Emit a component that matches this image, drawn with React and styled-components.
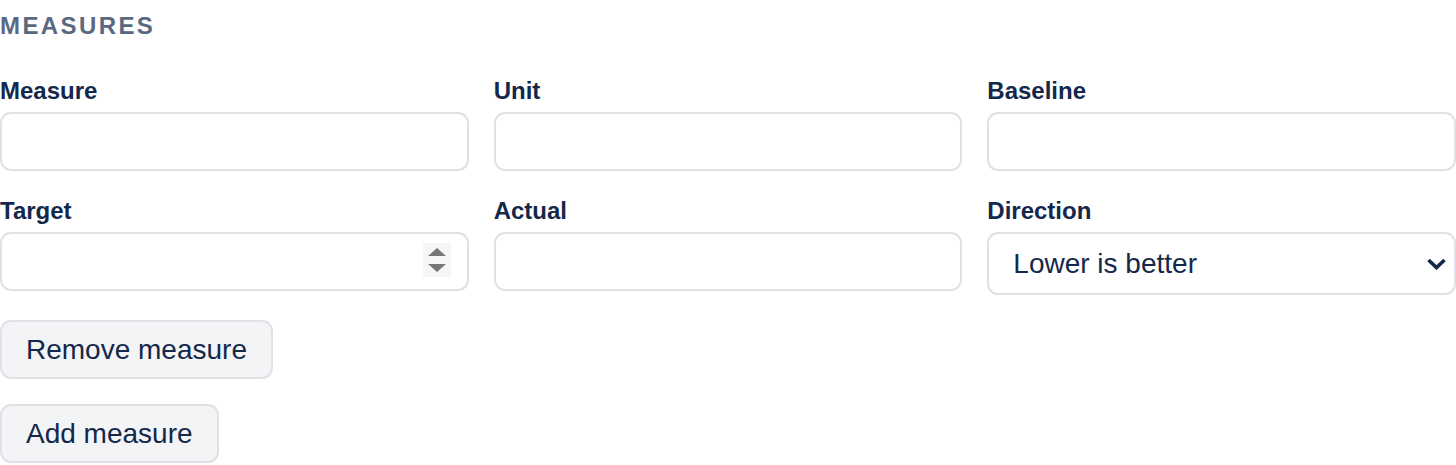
import React from "react";
import styled, { createGlobalStyle } from "styled-components";

const GlobalStyle = createGlobalStyle`
    body {
        margin: 0;
        background: #ffffff;
        font-family: "Liberation Sans", Arial, sans-serif;
        color: #13284b;
    }
`;

const Section = styled.section`
    width: 1456px;
    display: flex;
    flex-direction: column;
`;

const Heading = styled.h2`
    margin: 12px 0 0;
    font-size: 24px;
    line-height: 28px;
    font-weight: 700;
    letter-spacing: 2.4px;
    text-transform: uppercase;
    color: #5a6882;
`;

const Grid = styled.div`
    display: grid;
    grid-template-columns: repeat(3, 1fr);
    column-gap: 25px;
    row-gap: 26px;
    margin-top: 37px;
    align-items: start;
`;

const Field = styled.div`
    display: flex;
    flex-direction: column;
    gap: 7px;
`;

const Label = styled.label`
    font-size: 24px;
    line-height: 28px;
    font-weight: 700;
    color: #13284b;
`;

const InputWrap = styled.div`
    position: relative;
`;

const Input = styled.input`
    box-sizing: border-box;
    display: block;
    width: 100%;
    height: 59px;
    border: 2px solid #e0e0e6;
    border-radius: 11px;
    padding: 0 20px;
    font-family: inherit;
    font-size: 28px;
    color: #13284b;
    background: #fff;
    outline: none;
    -moz-appearance: textfield;

    &::-webkit-inner-spin-button,
    &::-webkit-outer-spin-button {
        -webkit-appearance: none;
        margin: 0;
    }
`;

const Spinner = styled.span`
    position: absolute;
    top: 11px;
    right: 18px;
    width: 28px;
    height: 34px;
    background: #f6f6f6;
    display: flex;
    align-items: center;
    justify-content: center;
    pointer-events: none;
`;

const Select = styled.select`
    box-sizing: border-box;
    display: block;
    width: 100%;
    height: 63px;
    border: 2px solid #e0e0e6;
    border-radius: 11px;
    padding: 0 50px 0 24px;
    font-family: inherit;
    font-size: 28px;
    color: #13284b;
    background: #fff url("data:image/svg+xml,%3Csvg xmlns='http://www.w3.org/2000/svg' width='19' height='12' viewBox='0 0 19 12'%3E%3Cpath d='M1.5 2l8 7.6 8-7.6' fill='none' stroke='%2313284b' stroke-width='3.6'/%3E%3C/svg%3E") no-repeat right 8px center;
    appearance: none;
    outline: none;
`;

const Actions = styled.div`
    display: flex;
    flex-direction: column;
    align-items: flex-start;
    gap: 25px;
    margin-top: 25px;
`;

const Button = styled.button`
    box-sizing: border-box;
    height: 59px;
    padding: 0 24px;
    border: 2px solid #e0e0e6;
    border-radius: 11px;
    background: #f3f4f6;
    font-family: inherit;
    font-size: 28px;
    color: #13284b;
    cursor: pointer;
`;

const SpinArrows = () => (
    <svg width="20" height="26" viewBox="0 0 20 26" aria-hidden="true">
        <path d="M10 1L19 9H1z" fill="#777" />
        <path d="M10 25L19 17H1z" fill="#777" />
    </svg>
);

const App = () => {
    return (
        <Section>
            <GlobalStyle />
            <Heading>Measures</Heading>
            <Grid>
                <Field>
                    <Label>Measure</Label>
                    <Input type="text" />
                </Field>
                <Field>
                    <Label>Unit</Label>
                    <Input type="text" />
                </Field>
                <Field>
                    <Label>Baseline</Label>
                    <Input type="text" />
                </Field>
                <Field>
                    <Label>Target</Label>
                    <InputWrap>
                        <Input type="number" />
                        <Spinner>
                            <SpinArrows />
                        </Spinner>
                    </InputWrap>
                </Field>
                <Field>
                    <Label>Actual</Label>
                    <Input type="text" />
                </Field>
                <Field>
                    <Label>Direction</Label>
                    <Select defaultValue="lower">
                        <option value="higher">Higher is better</option>
                        <option value="lower">Lower is better</option>
                    </Select>
                </Field>
            </Grid>
            <Actions>
                <Button>Remove measure</Button>
                <Button>Add measure</Button>
            </Actions>
        </Section>
    );
};

export default App;
